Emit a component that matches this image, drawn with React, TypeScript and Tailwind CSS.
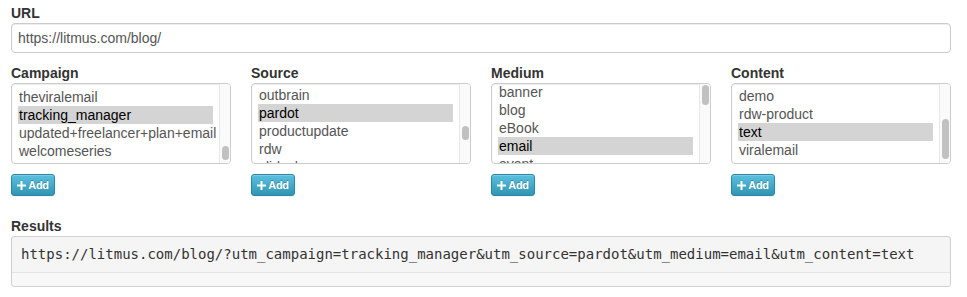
import React from 'react';

type ListProps = {
  label: string;
  items: string[];
  selected: string;
  offset: string;
  thumb: string;
};

const fields: ListProps[] = [
  {
    label: 'Campaign',
    items: ['theviralemail', 'tracking_manager', 'updated+freelancer+plan+email', 'welcomeseries'],
    selected: 'tracking_manager',
    offset: 'mt-0',
    thumb: 'mt-[62px] h-[14px]',
  },
  {
    label: 'Source',
    items: ['outbrain', 'pardot', 'productupdate', 'rdw', 'slideshare'],
    selected: 'pardot',
    offset: '-mt-[2px]',
    thumb: 'mt-[42px] h-[14px]',
  },
  {
    label: 'Medium',
    items: ['banner', 'blog', 'eBook', 'email', 'event'],
    selected: 'email',
    offset: '-mt-[5px]',
    thumb: 'mt-[1px] h-[20px]',
  },
  {
    label: 'Content',
    items: ['button', 'demo', 'rdw-product', 'text', 'viralemail'],
    selected: 'text',
    offset: '-mt-[19px]',
    thumb: 'mt-[35px] h-[40px]',
  },
];

const PlusIcon = () => (
  <svg width="9" height="9" viewBox="0 0 9 9" aria-hidden="true">
    <path d="M3.5 0h2v3.5H9v2H5.5V9h-2V5.5H0v-2h3.5z" fill="#fff" />
  </svg>
);

const AddButton = () => (
  <button
    type="button"
    className="mt-[10px] flex h-[22px] w-[44px] items-center justify-center gap-[2px] rounded-[3px] border border-[#2a87a5] bg-gradient-to-b from-[#5bc0de] to-[#2f96b4] text-[11px] font-bold tracking-[-0.3px] text-white [text-shadow:0_-1px_0_rgba(0,0,0,0.25)] shadow-[inset_0_1px_0_rgba(255,255,255,0.2),0_1px_2px_rgba(0,0,0,0.05)]"
  >
    <PlusIcon />
    <span>Add</span>
  </button>
);

const ListField = ({ label, items, selected, offset, thumb }: ListProps) => (
  <div className="flex w-[220px] flex-col">
    <label className="h-[20px] text-[14px] font-bold leading-[20px] text-[#333]">{label}</label>
    <div className="flex h-[81px] overflow-hidden rounded-[4px] border border-[#ccc] bg-white shadow-[inset_0_1px_1px_rgba(0,0,0,0.075)]">
      <div className="flex-1 overflow-hidden py-[4px] pl-[6px] pr-[6px]">
        <ul className={offset}>
          {items.map((item) => (
            <li
              key={item}
              className={
                item === selected
                  ? 'h-[18px] whitespace-nowrap bg-[#d4d4d4] px-[1px] text-[14px] leading-[18px] text-black'
                  : 'h-[18px] whitespace-nowrap px-[1px] text-[14px] leading-[18px] text-[#555]'
              }
            >
              {item}
            </li>
          ))}
        </ul>
      </div>
      <div className="flex w-[11px] justify-center border-l border-[#e8e8e8] bg-[#fafafa]">
        <div className={`w-[7px] rounded-full bg-[#c1c1c1] ${thumb}`} />
      </div>
    </div>
    <AddButton />
  </div>
);

const App = () => {
  const result =
    'https://litmus.com/blog/?utm_campaign=tracking_manager&utm_source=pardot&utm_medium=email&utm_content=text';

  return (
    <div className="w-[967px] bg-white px-[11px] pt-[3px] font-['Liberation_Sans',Arial,sans-serif]">
      <label className="block h-[20px] text-[14px] font-bold leading-[20px] text-[#333]">URL</label>
      <div className="flex h-[30px] w-[940px] items-center rounded-[4px] border border-[#ccc] px-[6px] text-[14px] text-[#555] shadow-[inset_0_1px_1px_rgba(0,0,0,0.075)]">
        https://litmus.com/blog/
      </div>

      <div className="mt-[10px] flex w-[940px] gap-[20px]">
        {fields.map((f) => (
          <ListField key={f.label} {...f} />
        ))}
      </div>

      <label className="mt-[20px] block h-[20px] text-[14px] font-bold leading-[20px] text-[#333]">
        Results
      </label>
      <div className="w-[940px] overflow-hidden rounded-[4px] border border-[rgba(0,0,0,0.15)] bg-[#f5f5f5]">
        <div className="flex h-[35px] items-center whitespace-nowrap px-[9px] font-['DejaVu_Sans_Mono',monospace] text-[14px] text-[#333]">
          {result}
        </div>
        <div className="h-[14px] border-t border-[#e4e4e4] bg-[#f8f8f8]" />
      </div>
    </div>
  );
};

export default App;
